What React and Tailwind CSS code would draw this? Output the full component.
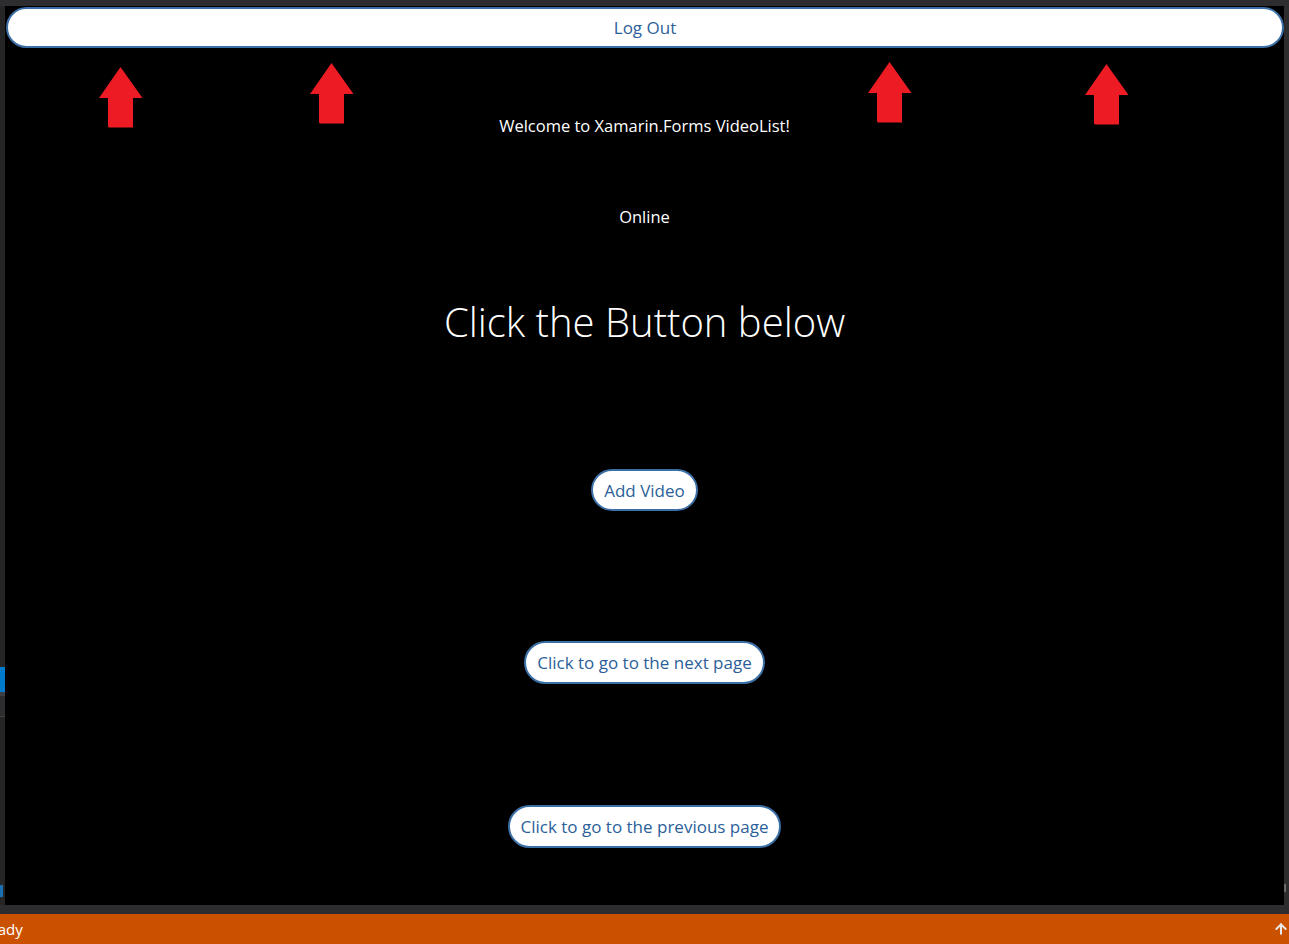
import React from "react";
import { ArrowUp } from "lucide-react";

const font = { fontFamily: '"Open Sans", "Noto Sans", "Liberation Sans", sans-serif' };

function RedArrow({ className }) {
  return (
    <svg
      className={"absolute " + className}
      width="44"
      height="61"
      viewBox="0 0 44 61"
    >
      <polygon
        points="21.5,0 43.5,31 34,31 34,60.5 10,60.5 9,59.5 9,31 0,31"
        fill="#ed1c24"
      />
    </svg>
  );
}

function PillButton({ children, className = "" }) {
  return (
    <button
      className={
        "h-[42px] rounded-full bg-white border-2 border-[#3b6fa6] text-[#2c5f99] text-[17px] leading-none px-[11px] " +
        className
      }
      style={font}
    >
      {children}
    </button>
  );
}

export default function App() {
  return (
    <div className="relative w-[1289px] h-[944px] bg-[#2d2d30] flex flex-col overflow-hidden" style={font}>
      <div className="h-[6px]" />
      <div className="flex h-[899px]">
        {/* left strip of IDE behind */}
        <div className="w-[5px] flex flex-col bg-[#252526]">
          <div className="h-[661px]" />
          <div className="h-[25px] bg-[#007acc]" />
          <div className="h-[4px] bg-[#3f3f46]" />
          <div className="h-[20px] bg-[#2d2d30]" />
          <div className="h-[1px] bg-[#3f3f46]" />
          <div className="flex-1" />
          <div className="h-[12px] w-[3px] bg-[#1a6fb5]" />
          <div className="h-[8px]" />
        </div>
        <div className="flex-1 bg-black flex flex-col items-center">
          <button
            className="mt-[1px] ml-[1px] self-stretch h-[41px] rounded-full bg-white border-2 border-[#3b6fa6] text-[#2c5f99] text-[17px]"
            style={font}
          >
            Log Out
          </button>
          <div className="mt-[66px] h-[24px] flex items-center text-white text-[16.5px]">
            Welcome to Xamarin.Forms VideoList!
          </div>
          <div className="mt-[67px] h-[24px] flex items-center text-white text-[16.5px]">
            Online
          </div>
          <div className="mt-[68px] h-[50px] flex items-center text-white text-[40px] leading-none font-light">
            Click the Button below
          </div>
          <PillButton className="mt-[122px]">Add Video</PillButton>
          <PillButton className="mt-[130px] h-[43px]">Click to go to the next page</PillButton>
          <PillButton className="mt-[121px] h-[43px]">Click to go to the previous page</PillButton>
        </div>
        <div className="w-[5px] bg-[#2d2d30] flex flex-col">
          <div className="flex-1" />
          <div className="h-[8px] w-[2px] bg-[#6b6b6b]" />
          <div className="h-[13px]" />
        </div>
      </div>
      <div className="h-[9px] bg-[#2d2d30]" />
      <div className="h-[30px] bg-[#ca5100] flex items-center justify-between overflow-hidden">
        <span className="text-white text-[15px] -ml-[20px]" style={font}>Ready</span>
        <ArrowUp className="mr-[0px] text-[#e8e8e8]" size={16} strokeWidth={3} />
      </div>

      <RedArrow className="left-[99px] top-[67px]" />
      <RedArrow className="left-[310px] top-[63px]" />
      <RedArrow className="left-[868px] top-[62px]" />
      <RedArrow className="left-[1085px] top-[64px]" />
    </div>
  );
}
